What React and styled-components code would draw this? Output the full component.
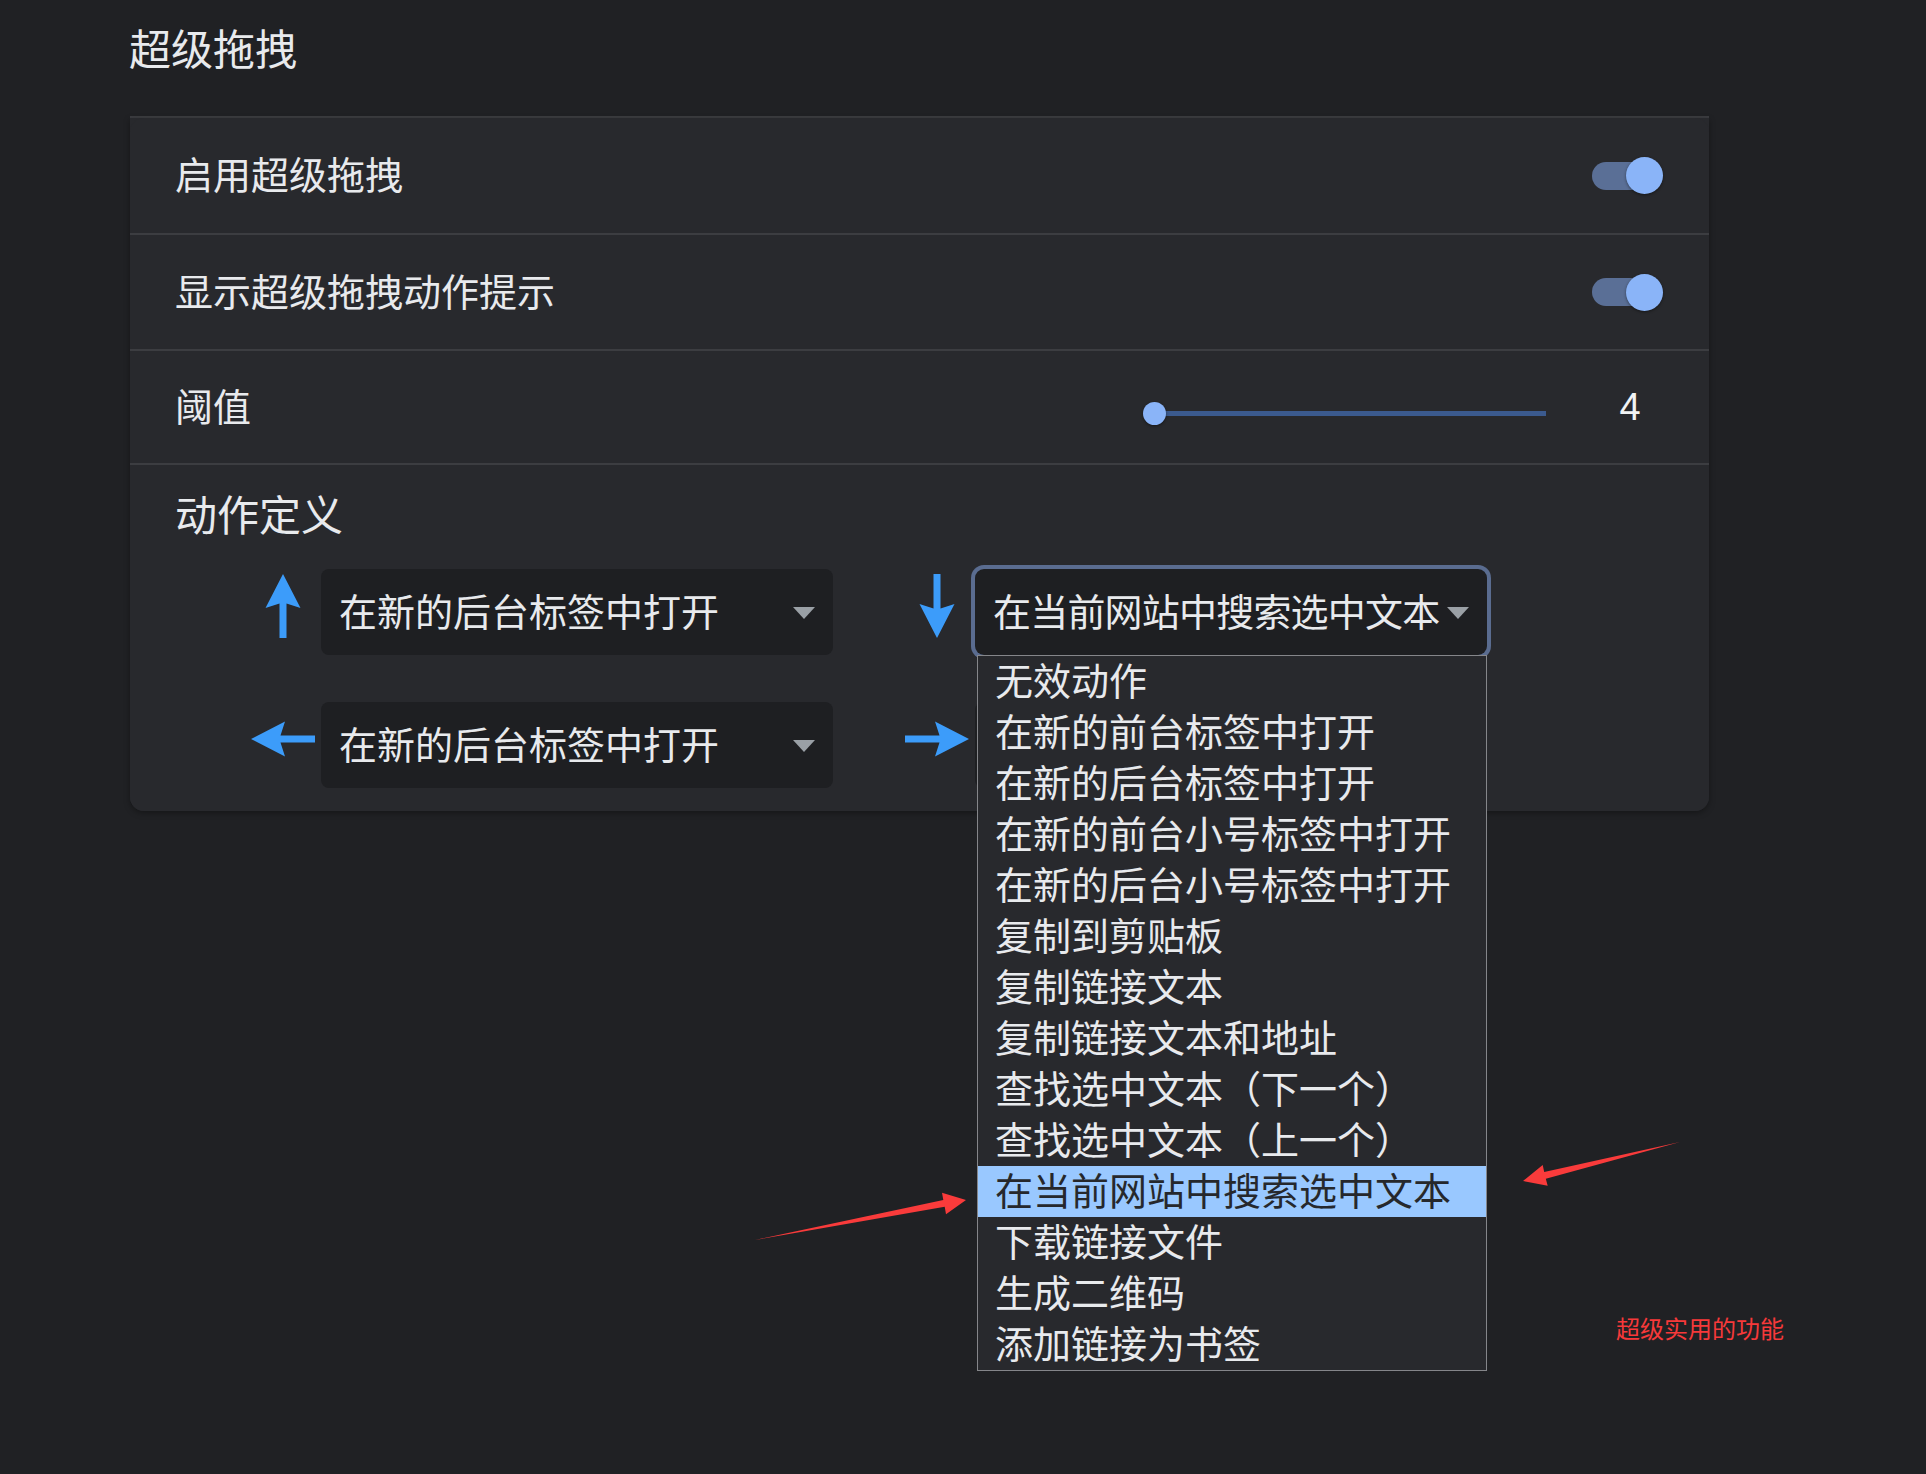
import React from "react";
import styled, { createGlobalStyle } from "styled-components";

const CJK = `"Noto Sans CJK SC", "Liberation Sans", sans-serif`;

const GlobalStyle = createGlobalStyle`
  html, body {
    margin: 0;
    padding: 0;
    background: #202124;
    min-height: 100vh;
  }
  body {
    font-family: ${CJK};
    color: #e8eaed;
  }
`;

const Page = styled.div`
  position: relative;
  width: 1926px;
  min-height: 1474px;
  padding-left: 130px;
  box-sizing: border-box;
`;

const Title = styled.div`
  padding-top: 22px;
  margin-left: -1px;
  font-size: 42px;
  line-height: 50px;
  color: #e8eaed;
  margin-bottom: 44px;
`;

const Rule = styled.div`
  width: 1579px;
  height: 2px;
  background: #3c3d41;
`;

const Card = styled.div`
  width: 1579px;
  background: #28292d;
  border-radius: 0 0 14px 14px;
  box-shadow: 0 2px 6px rgba(0, 0, 0, 0.35);
  position: relative;
  &:before {
    content: "";
    position: absolute;
    inset: 0;
    border-radius: 14px;
    background: #28292d;
    z-index: 0;
  }
  & > * {
    position: relative;
    z-index: 1;
  }
`;

const Row = styled.div`
  height: ${(p) => p.$h}px;
  display: flex;
  align-items: center;
  justify-content: space-between;
  padding: 0 46px 0 45px;
  border-bottom: 2px solid #3c3d41;
`;

const Label = styled.div`
  font-size: 38px;
  line-height: 46px;
  padding-bottom: 5px;
  color: #e8eaed;
`;

const Toggle = styled.div`
  position: relative;
  width: 71px;
  height: 37px;
`;

const Track = styled.div`
  position: absolute;
  left: 0;
  top: 4.5px;
  width: 66px;
  height: 28px;
  border-radius: 14px;
  background: #5a6f96;
`;

const Knob = styled.div`
  position: absolute;
  right: 0;
  top: 0;
  width: 37px;
  height: 37px;
  border-radius: 50%;
  background: #8ab4f8;
  box-shadow: 0 1px 3px rgba(0, 0, 0, 0.45);
`;

const RightGroup = styled.div`
  display: flex;
  align-items: center;
  gap: 51px;
`;

const Slider = styled.div`
  position: relative;
  width: 403px;
  height: 23px;
  margin-top: 12px;
  display: flex;
  align-items: center;
`;

const SliderTrack = styled.div`
  margin-left: 11px;
  flex: 1;
  height: 5px;
  background: #3b5a8e;
`;

const Thumb = styled.div`
  position: absolute;
  left: 0;
  top: 0;
  width: 23px;
  height: 23px;
  border-radius: 50%;
  background: #8ab4f8;
  box-shadow: 0 1px 3px rgba(0, 0, 0, 0.45);
`;

const Value = styled.div`
  width: 66px;
  text-align: center;
  font-family: "Liberation Sans", sans-serif;
  font-size: 38px;
  color: #f1f3f4;
`;

const ActionSection = styled.div`
  padding: 23px 0 23px 45px;
`;

const Heading = styled.div`
  font-size: 42px;
  line-height: 50px;
  color: #e8eaed;
`;

const ActionGrid = styled.div`
  margin-top: 31px;
  margin-left: 75px;
  display: grid;
  grid-template-columns: auto auto;
  justify-content: start;
  column-gap: 71px;
  row-gap: 47px;
`;

const ActionItem = styled.div`
  display: flex;
  align-items: center;
  gap: 5px;
`;

const ArrowCell = styled.div`
  width: 66px;
  height: 64px;
  margin-bottom: 12px;
  display: flex;
  align-items: center;
  justify-content: center;
`;

const SelectBox = styled.div`
  position: relative;
  width: 512px;
  height: 86px;
  box-sizing: border-box;
  padding: 0 18px 0 18px;
  display: flex;
  align-items: center;
  background: #1e1f22;
  border-radius: ${(p) => (p.$focused ? "9px" : "8px")};
  box-shadow: ${(p) => (p.$focused ? "0 0 0 4px #5a6c90" : "none")};
`;

const SelectText = styled.div`
  flex: 1;
  white-space: nowrap;
  font-size: 38px;
  line-height: 46px;
  padding-bottom: 5px;
  letter-spacing: ${(p) => (p.$tight ? "-0.8px" : "0")};
  color: #e8eaed;
`;

const Caret = styled.div`
  width: 0;
  height: 0;
  flex: none;
  margin-top: 2px;
  border-left: 11px solid transparent;
  border-right: 11px solid transparent;
  border-top: 12px solid #9aa0a6;
`;

const Menu = styled.div`
  position: absolute;
  top: 100%;
  left: 2px;
  width: 510px;
  box-sizing: border-box;
  border: 1px solid #85868a;
  background: #28292d;
  z-index: 5;
`;

const MenuItem = styled.div`
  height: 51px;
  line-height: 46px;
  padding-left: 17px;
  font-size: 38px;
  white-space: nowrap;
  background: ${(p) => (p.$active ? "#99c8ff" : "transparent")};
  color: ${(p) => (p.$active ? "#26282c" : "#e8eaed")};
`;

const Overlay = styled.svg`
  position: absolute;
  left: 0;
  top: 0;
  pointer-events: none;
  z-index: 10;
`;

const Note = styled.div`
  position: absolute;
  left: 1616px;
  top: 1316px;
  font-size: 24px;
  line-height: 24px;
  color: #f7393a;
  z-index: 10;
`;

const ROT = { up: 0, right: 90, down: 180, left: 270 };

function Arrow({ dir }) {
  return (
    <svg width="64" height="64" viewBox="0 0 64 64">
      <polygon
        transform={`rotate(${ROT[dir]} 32 32)`}
        fill="#3c9cfa"
        points="32,0 49.5,34 35.5,29.5 35.5,64 28.5,64 28.5,29.5 14.5,34"
      />
    </svg>
  );
}

const OPTIONS = [
  "无效动作",
  "在新的前台标签中打开",
  "在新的后台标签中打开",
  "在新的前台小号标签中打开",
  "在新的后台小号标签中打开",
  "复制到剪贴板",
  "复制链接文本",
  "复制链接文本和地址",
  "查找选中文本（下一个）",
  "查找选中文本（上一个）",
  "在当前网站中搜索选中文本",
  "下载链接文件",
  "生成二维码",
  "添加链接为书签",
];

function Select({ value, open }) {
  return (
    <SelectBox $focused={open}>
      <SelectText $tight={open}>{value}</SelectText>
      <Caret />
      {open && (
        <Menu>
          {OPTIONS.map((o) => (
            <MenuItem key={o} $active={o === value}>
              {o}
            </MenuItem>
          ))}
        </Menu>
      )}
    </SelectBox>
  );
}

export default function App() {
  return (
    <Page>
      <GlobalStyle />
      <Title>超级拖拽</Title>
      <Rule />
      <Card>
        <Row $h={115}>
          <Label>启用超级拖拽</Label>
          <Toggle>
            <Track />
            <Knob />
          </Toggle>
        </Row>
        <Row $h={114}>
          <Label>显示超级拖拽动作提示</Label>
          <Toggle>
            <Track />
            <Knob />
          </Toggle>
        </Row>
        <Row $h={112}>
          <Label>阈值</Label>
          <RightGroup>
            <Slider>
              <SliderTrack />
              <Thumb />
            </Slider>
            <Value>4</Value>
          </RightGroup>
        </Row>
        <ActionSection>
          <Heading>动作定义</Heading>
          <ActionGrid>
            <ActionItem>
              <ArrowCell>
                <Arrow dir="up" />
              </ArrowCell>
              <Select value="在新的后台标签中打开" />
            </ActionItem>
            <ActionItem>
              <ArrowCell>
                <Arrow dir="down" />
              </ArrowCell>
              <Select value="在当前网站中搜索选中文本" open />
            </ActionItem>
            <ActionItem>
              <ArrowCell>
                <Arrow dir="left" />
              </ArrowCell>
              <Select value="在新的后台标签中打开" />
            </ActionItem>
            <ActionItem>
              <ArrowCell>
                <Arrow dir="right" />
              </ArrowCell>
              <Select value="无效动作" />
            </ActionItem>
          </ActionGrid>
        </ActionSection>
      </Card>

      <Overlay width="1926" height="1474" viewBox="0 0 1926 1474">
        <polygon
          fill="#f93b3b"
          points="755,1240 943.3,1200 942,1192.7 966,1200 946,1214.3 944.7,1206.8"
        />
        <polygon
          fill="#f93b3b"
          points="1680,1142 1544.2,1171.9 1542.7,1165 1523,1181 1547.7,1185.7 1545.8,1178.7"
        />
      </Overlay>
      <Note>超级实用的功能</Note>
    </Page>
  );
}
